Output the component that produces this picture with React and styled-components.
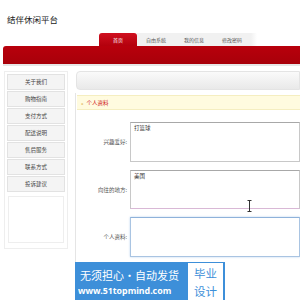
import React from 'react'
import styled, { createGlobalStyle } from 'styled-components'

const GlobalStyle = createGlobalStyle`
  html, body {
    margin: 0;
    padding: 0;
    background: #ffffff;
  }
  body {
    width: 300px;
    height: 300px;
    overflow: hidden;
    font-family: 'Noto Sans CJK SC', 'Noto Sans', sans-serif;
  }
`

const sideItems = ['关于我们', '购物指南', '支付方式', '配送说明', '售后服务', '联系方式', '投诉建议']
const tabs = ['首页', '自由系统', '我的信息', '修改密码']

const App = () => {
  return (
    <>
      <GlobalStyle />
      <Page>
        <Header>
          <Logo>结伴休闲平台</Logo>
        </Header>

        <TabRow>
          {tabs.map((t, i) => (
            <Tab key={t} active={i === 0}>{t}</Tab>
          ))}
          <TabTail />
        </TabRow>
        <RedBar />
        <RedShadow />

        <Body>
          <Sidebar>
            {sideItems.map((s) => (
              <SideItem key={s}>{s}</SideItem>
            ))}
            <SideBlank />
          </Sidebar>

          <Main>
            <GrayBar />
            <Panel>
              <YellowBar>
                <Arrow>»</Arrow> 个人资料
              </YellowBar>
              <Form>
                <Row>
                  <Label>兴趣爱好:</Label>
                  <Box h={40}>打篮球</Box>
                </Row>
                <Row>
                  <Label>向往的地方:</Label>
                  <Box h={39} pink>美国</Box>
                </Row>
                <Row>
                  <Label>个人资料:</Label>
                  <Box h={40} focus />
                </Row>
              </Form>
            </Panel>
          </Main>
        </Body>

        <Cursor viewBox="0 0 5 12">
          <path d="M0.5 0.5h4M2.5 0.5v11M0.5 11.5h4" stroke="#333" strokeWidth="1" fill="none" />
        </Cursor>

        <Badge>
          <BadgeText>
            <BadgeLine>无须担心·自动发货</BadgeLine>
            <BadgeUrl>www.51topmind.com</BadgeUrl>
          </BadgeText>
          <BadgeTag>
            <TagLine>毕业</TagLine>
            <TagLine>设计</TagLine>
          </BadgeTag>
        </Badge>
      </Page>
    </>
  )
}

export default App

const Page = styled.div`
  position: relative;
  width: 300px;
  height: 300px;
  overflow: hidden;
`

const Header = styled.div`
  height: 33px;
  padding-left: 7px;
  box-sizing: border-box;
  padding-top: 13px;
`

const Logo = styled.div`
  font-size: 8.5px;
  line-height: 12px;
  color: #222;
`

const TabRow = styled.div`
  display: flex;
  align-items: flex-end;
  height: 13px;
  padding-left: 99px;
`

const Tab = styled.div`
  width: 38px;
  height: 13px;
  display: flex;
  align-items: center;
  justify-content: center;
  font-size: 5px;
  color: ${(p) => (p.active ? '#fff' : '#555')};
  background: ${(p) => (p.active ? 'linear-gradient(#d01020, #b3000c)' : '#f1f1f1')};
  border-radius: ${(p) => (p.active ? '3px 3px 0 0' : '0')};
`

const TabTail = styled.div`
  width: 6px;
  height: 13px;
  background: linear-gradient(90deg, #f1f1f1, #fff);
`

const RedBar = styled.div`
  margin-left: 3px;
  height: 18px;
  background: linear-gradient(#b8000c, #a8000a);
  border-radius: 3px 0 0 0;
`

const RedShadow = styled.div`
  margin-left: 3px;
  height: 2px;
  background: #e6e6e6;
`

const Body = styled.div`
  display: flex;
  gap: 7px;
  padding: 5px 0 0 4px;
`

const Sidebar = styled.div`
  width: 79px;
  height: 178px;
  border: 1px solid #eeeeee;
  box-sizing: border-box;
  padding: 2px 2px;
  display: flex;
  flex-direction: column;
  gap: 1px;
`

const SideItem = styled.div`
  height: 16px;
  box-sizing: border-box;
  display: flex;
  align-items: center;
  justify-content: center;
  font-size: 5.5px;
  color: #444;
  background: #f4f4f4;
  border: 1px solid #e2e2e2;
`

const SideBlank = styled.div`
  flex: 1;
  margin: 3px 1px 3px;
  border: 1px solid #eeeeee;
`

const Main = styled.div`
  flex: 1;
  display: flex;
  flex-direction: column;
`

const GrayBar = styled.div`
  height: 17px;
  border-radius: 4px 0 0 4px;
  border: 1px solid #e4e4e4;
  background: linear-gradient(#fafafa, #e9e9e9);
  margin-left: 1px;
`

const Panel = styled.div`
  margin-top: 3px;
  border-left: 1px solid #e5e5e5;
  height: 172px;
  padding-top: 2px;
`

const YellowBar = styled.div`
  margin-left: 1px;
  height: 13px;
  display: flex;
  align-items: center;
  gap: 3px;
  padding-left: 4px;
  background: #fffbdf;
  border-top: 1px solid #f5eec0;
  border-bottom: 1px solid #f5eec0;
  color: #d0211c;
  font-size: 5.5px;
`

const Arrow = styled.span`
  color: #d59b2a;
  font-size: 5px;
`

const Form = styled.div`
  display: flex;
  flex-direction: column;
  gap: 8px;
  padding-top: 12px;
`

const Row = styled.div`
  display: flex;
  align-items: center;
`

const Label = styled.div`
  width: 51px;
  padding-right: 3px;
  text-align: right;
  font-size: 5.5px;
  color: #555;
`

const Box = styled.div`
  width: 170px;
  height: ${(p) => p.h}px;
  box-sizing: border-box;
  padding: 1px 3px;
  font-size: 5.5px;
  color: #333;
  background: #fff;
  border: 1px solid ${(p) => (p.focus ? '#a9c4e2' : '#c8c8c8')};
  border-top-color: ${(p) => (p.focus ? '#8fb2da' : '#a8a8a8')};
  border-bottom-color: ${(p) => (p.pink ? '#d9b8d6' : p.focus ? '#a9c4e2' : '#c8c8c8')};
  box-shadow: ${(p) => (p.focus ? '0 0 2px #bcd4ee' : 'none')};
`

const Cursor = styled.svg`
  position: absolute;
  left: 247px;
  top: 200px;
  width: 5px;
  height: 12px;
`

const Badge = styled.div`
  position: absolute;
  left: 75px;
  top: 262px;
  width: 150px;
  height: 40px;
  background: #3d8fd9;
  display: flex;
  align-items: stretch;
  padding: 1px 2px 0 3px;
  box-sizing: border-box;
  gap: 2px;
`

const BadgeText = styled.div`
  display: flex;
  flex-direction: column;
  justify-content: center;
  gap: 3px;
  color: #fff;
  flex: 1;
  min-width: 0;
  overflow: hidden;
  white-space: nowrap;
`

const BadgeLine = styled.div`
  font-size: 11px;
  line-height: 14px;
  padding-left: 2px;
`

const BadgeUrl = styled.div`
  font-family: 'Noto Sans', sans-serif;
  font-size: 8.8px;
  line-height: 12px;
  font-weight: bold;
`

const BadgeTag = styled.div`
  width: 35px;
  flex: none;
  background: #fff;
  color: #3d8fd9;
  display: flex;
  flex-direction: column;
  align-items: center;
  justify-content: center;
  margin-bottom: 2px;
`

const TagLine = styled.div`
  font-size: 11.5px;
  line-height: 18px;
`
